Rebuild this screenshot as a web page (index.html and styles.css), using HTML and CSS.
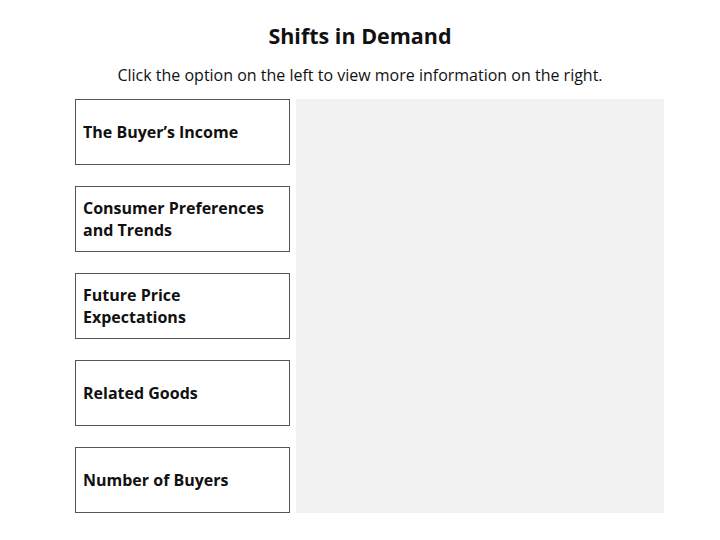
FILE: index.html
```html
<!DOCTYPE html>
<html lang="en">
<head>
  <meta charset="UTF-8" />
  <title>Shifts in Demand</title>
  <link rel="stylesheet" href="styles.css">
</head>
<body>
  <div class="page">
    <h1>Shifts in Demand</h1>
    <p class="intro">Click the option on the left to view more information on the right.</p>
    <div class="explorer">
      <div class="options">
        <button class="option">The Buyer’s Income</button>
        <button class="option">Consumer Preferences and Trends</button>
        <button class="option">Future Price Expectations</button>
        <button class="option">Related Goods</button>
        <button class="option">Number of Buyers</button>
      </div>
      <div class="panel"></div>
    </div>
  </div>
</body>
</html>
```

FILE: styles.css
```css
* {
  margin: 0;
  padding: 0;
  box-sizing: border-box;
}

body {
  font-family: 'Open Sans', 'Liberation Sans', sans-serif;
  color: #111;
  background: #fff;
}

.page {
  width: 720px;
  padding-top: 22px;
}

h1 {
  font-size: 21.5px;
  font-weight: 700;
  text-align: center;
  line-height: 28px;
}

.intro {
  font-size: 16px;
  text-align: center;
  margin-top: 14px;
  line-height: 22px;
}

.explorer {
  display: flex;
  gap: 6px;
  margin: 13px 0 0 75px;
}

.options {
  display: flex;
  flex-direction: column;
  gap: 21px;
}

.option {
  width: 215px;
  height: 66px;
  border: 1px solid #555;
  background: #fff;
  font-family: inherit;
  font-size: 16px;
  font-weight: 700;
  line-height: 22px;
  text-align: left;
  padding: 0 10px 0 7px;
  color: #111;
}

.panel {
  width: 368px;
  background: #f2f2f2;
}
```
